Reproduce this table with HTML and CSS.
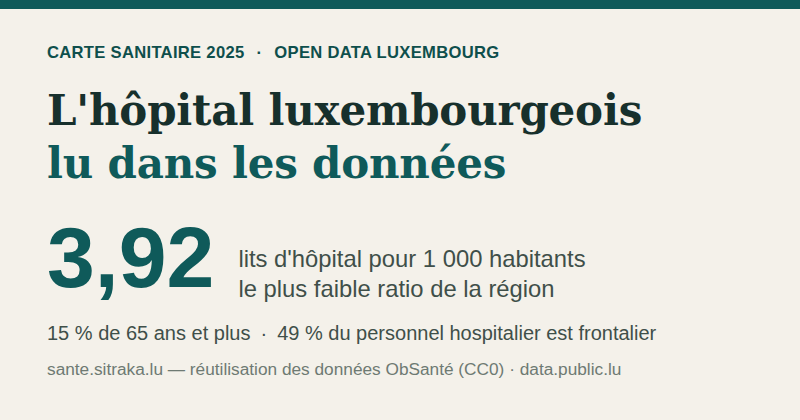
FILE: index.html
```html
<!DOCTYPE html>
<html lang="fr">
<head>
<meta charset="utf-8">
<title>Carte sanitaire 2025</title>
<link rel="stylesheet" href="styles.css">
</head>
<body>
<div class="topbar"></div>
<main class="card">
  <p class="eyebrow">CARTE SANITAIRE 2025<span class="sep">·</span>OPEN DATA LUXEMBOURG</p>
  <h1 class="title"><span class="l1">L'hôpital luxembourgeois</span><span class="l2">lu dans les données</span></h1>
  <div class="stat">
    <div class="num">3,92</div>
    <div class="desc">lits d'hôpital pour 1 000 habitants<br>le plus faible ratio de la région</div>
  </div>
  <p class="facts">15 % de 65 ans et plus<span class="sep2">·</span>49 % du personnel hospitalier est frontalier</p>
  <p class="foot">sante.sitraka.lu — réutilisation des données ObSanté (CC0) · data.public.lu</p>
</main>
</body>
</html>
```
FILE: styles.css
```css
html, body { margin: 0; padding: 0; }
body {
  background: #f4f1ea;
  width: 800px;
  height: 420px;
  overflow: hidden;
  font-family: "Liberation Sans", Arial, sans-serif;
}
.topbar { height: 9px; background: #0f5a5a; }
.card { padding: 34px 47px 0; }
.eyebrow {
  margin: 0;
  font-size: 16.6px;
  font-weight: 700;
  letter-spacing: 0.3px;
  color: #0e4f4c;
  line-height: 20px;
}
.sep { margin: 0 12px; }
.title {
  margin: 21px 0 0;
  font-family: "DejaVu Serif", Georgia, serif;
  font-weight: 700;
  font-size: 42px;
  line-height: 53px;
  letter-spacing: -0.2px;
}
.title span { display: block; }
.l1 { color: #17302c; }
.l2 { color: #0f5a5a; }
.stat {
  display: flex;
  align-items: flex-start;
  margin-top: 24px;
}
.num {
  font-size: 86px;
  font-weight: 700;
  line-height: 86px;
  color: #0f5a5a;
}
.desc {
  margin-left: 24px;
  padding-top: 30px;
  font-size: 23.8px;
  line-height: 30px;
  color: #3f4f49;
}
.facts {
  margin: 17px 0 0;
  font-size: 20px;
  line-height: 24px;
  color: #3f4f49;
}
.sep2 { margin: 0 10px; }
.foot {
  margin: 14px 0 0;
  font-size: 17.25px;
  line-height: 20px;
  color: #6e7a73;
}
```
